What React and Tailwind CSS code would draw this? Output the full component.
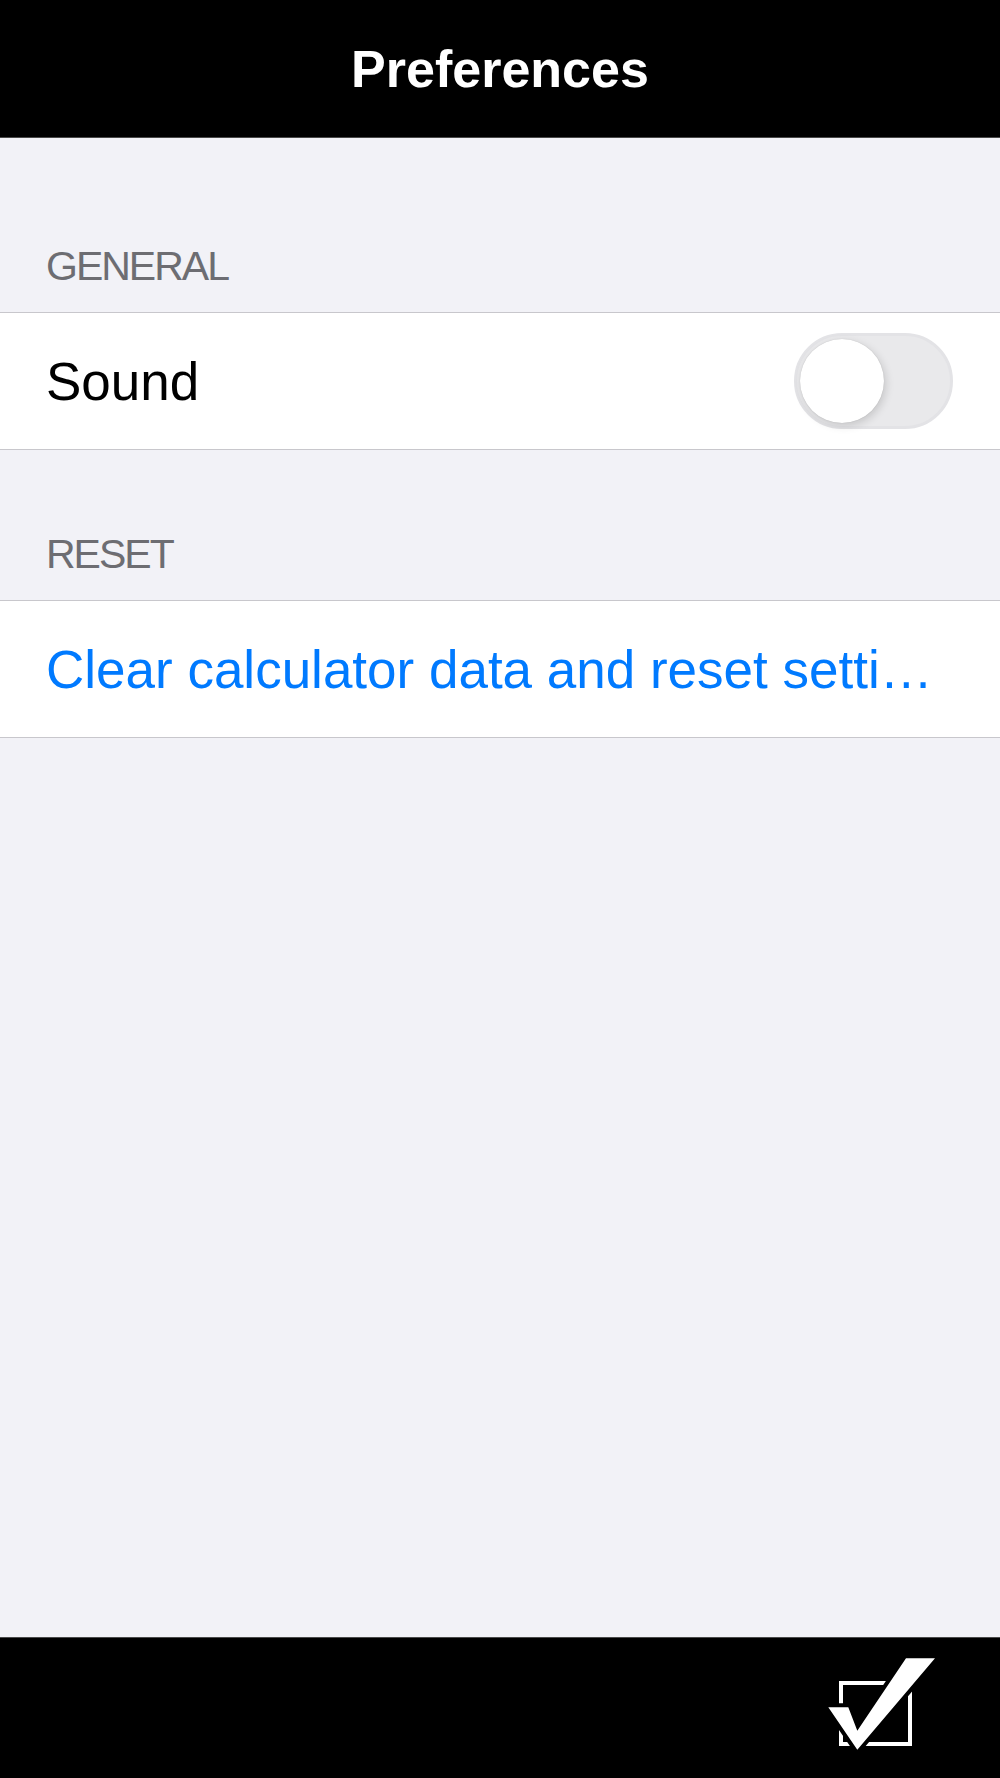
import { useState } from "react";

function Toggle({ on, onChange }) {
  return (
    <button
      type="button"
      onClick={() => onChange(!on)}
      className={`relative h-[96px] w-[159px] shrink-0 rounded-full border-[3px] ${on ? "border-[#34c759] bg-[#34c759]" : "border-[#e3e3e6] bg-[#e9e9eb]"}`}
    >
      <span
        className={`absolute top-[3px] h-[84px] w-[84px] rounded-full bg-white shadow-[2px_3px_8px_rgba(0,0,0,0.15),0_0_1px_rgba(0,0,0,0.2)] ${on ? "left-[66px]" : "left-[3px]"}`}
      />
    </button>
  );
}

function SectionHeader({ label, height }) {
  return (
    <div className={`flex items-end px-[46px] pb-[25px] ${height}`}>
      <span className="text-[41px] leading-none tracking-[-2px] text-[#6d6d72]">{label}</span>
    </div>
  );
}

function CheckIcon() {
  return (
    <svg width="125" height="110" viewBox="0 0 125 110">
      <rect x="21" y="34" width="69" height="61" fill="none" stroke="white" strokeWidth="4" />
      <polygon
        points="8.3,58.3 28.3,58.3 37.3,81.7 86,9.3 115,9.3 37.3,100.7"
        fill="black"
        stroke="black"
        strokeWidth="8"
        strokeLinejoin="round"
      />
      <polygon points="8.3,58.3 28.3,58.3 37.3,81.7 86,9.3 115,9.3 37.3,100.7" fill="white" />
    </svg>
  );
}

export default function App() {
  const [sound, setSound] = useState(false);

  return (
    <div className="flex h-[1778px] w-[1000px] flex-col bg-[#f2f2f7] font-['Liberation_Sans',Arial,sans-serif]">
      <header className="flex h-[138px] shrink-0 items-center justify-center border-b border-[#4a4a4a] bg-black">
        <h1 className="text-[52px] font-bold leading-none text-white">Preferences</h1>
      </header>

      <SectionHeader label="GENERAL" height="h-[174px]" />
      <div className="flex h-[138px] items-center justify-between border-y border-[#c8c7cc] bg-white pl-[46px] pr-[47px]">
        <span className="text-[53px] leading-none text-black">Sound</span>
        <Toggle on={sound} onChange={setSound} />
      </div>

      <SectionHeader label="RESET" height="h-[150px]" />
      <div className="flex h-[138px] items-center border-y border-[#c8c7cc] bg-white pl-[46px] pr-[40px]">
        <span className="whitespace-nowrap text-[53px] leading-none text-[#007aff]">
          Clear calculator data and reset setti…
        </span>
      </div>

      <div className="flex-1" />

      <footer className="flex h-[141px] shrink-0 items-start justify-end border-t border-[#4a4a4a] bg-black pr-[55px] pt-[11px]">
        <CheckIcon />
      </footer>
    </div>
  );
}
